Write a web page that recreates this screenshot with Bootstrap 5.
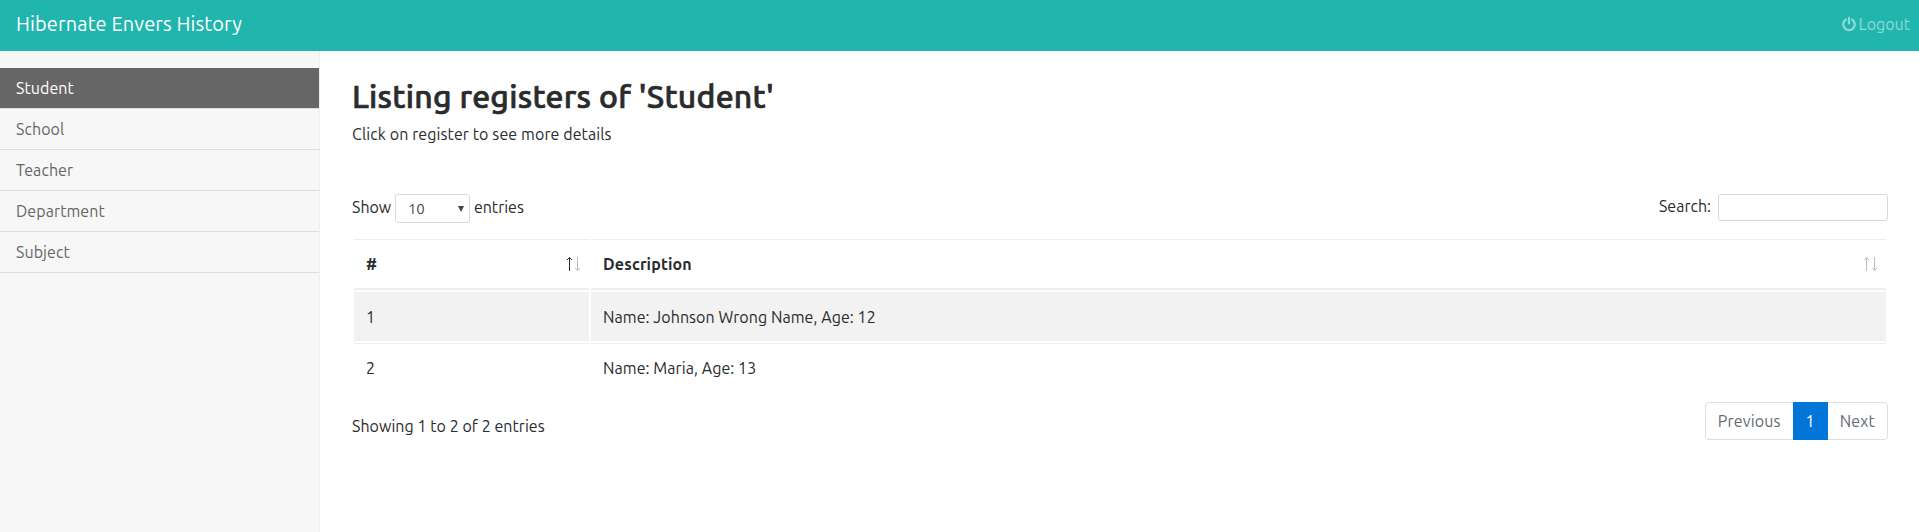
<!DOCTYPE html>
<html lang="en">
<head>
<meta charset="utf-8">
<title>Hibernate Envers History</title>
<link href="https://cdn.jsdelivr.net/npm/bootstrap@5.3.0/dist/css/bootstrap.min.css" rel="stylesheet">
<style>
  body { font-family: Ubuntu, "Noto Sans", sans-serif; font-size: 16px; line-height: 24px; letter-spacing: .07px; color: #292b2c; height: 532px; overflow: hidden; }
  .topbar { background: #20b5ad; height: 51px; padding: 0 9px 0 16px; }
  .topbar .navbar-brand { font-size: 20px; line-height: 30px; letter-spacing: .12px; padding: 0; margin-top: -3px; color: #fff; }
  .logout { color: rgba(255,255,255,.5); margin-top: -3px; gap: 3px; letter-spacing: 0; }
  .sidebar { width: 320px; background: #f7f7f7; border-right: 1px solid #eee; padding-top: 17px; }
  .sidebar .nav-link { color: #666; height: 41px; padding: 8px 16px; border-bottom: 1px solid #ddd; }
  .sidebar .nav-link.active { background: #666; background-clip: padding-box; color: #fff; }
  .content { padding: 26px 31px 0 32px; }
  h2 { font-size: 32px; line-height: 35px; font-weight: 500; letter-spacing: .25px; -webkit-text-stroke: .7px #292b2c; margin: 2px 0 8px; }
  .intro { letter-spacing: .1px; }
  .controls { margin-top: 48px; height: 43px; }
  .controls label { letter-spacing: 0; }
  .len { width: 75px; height: 29px; border: 1px solid #d9d9d9; border-radius: 3px; color: #464a4c; font-size: 15px; padding: 0 5px 0 12px; margin-left: -.4px; }
  .find { width: 170px; height: 27px; border: 1px solid #d9d9d9; border-radius: 3px; padding: 0 8px; margin-left: 7px; }
  .caption-text { padding-bottom: 3px; }
  .records { border-collapse: separate; border-spacing: 2px; width: 100%; table-layout: fixed; }
  .records th, .records td { height: 49px; padding: 12px; border-top: 1px solid #eceeef; }
  .records th { height: 51px; border-bottom: 2px solid #eceeef; letter-spacing: .15px; }
  .records tbody tr:first-child td { background: #f2f2f2; }
  .records th:first-child { width: 235px; }
  .sorter { margin-right: -4px; }
  .pagination { --bs-pagination-color: #636c72; --bs-pagination-border-color: #ddd; --bs-pagination-disabled-color: #636c72; --bs-pagination-disabled-bg: #fff; --bs-pagination-disabled-border-color: #ddd; --bs-pagination-active-bg: #0275d8; --bs-pagination-active-border-color: #0275d8; --bs-pagination-border-radius: 4px; margin: 8px 0 0; letter-spacing: .15px; }
  .page-link { height: 38px; padding: 6px 12px; }
  .summary { margin-top: 20px; letter-spacing: .04px; }
</style>
</head>
<body class="d-flex flex-column">
<nav class="topbar navbar flex-shrink-0 flex-nowrap">
  <a class="navbar-brand me-0" href="#">Hibernate Envers History</a>
  <a class="logout d-flex align-items-center text-decoration-none" href="#">
    <svg width="14" height="16" viewBox="0 0 14 16" fill="none" stroke="currentColor" stroke-width="2.2" stroke-linecap="round"><path d="M7 1.8v5.6M3.8 3.7a5.7 5.7 0 1 0 6.4 0"/></svg>Logout</a>
</nav>
<div class="d-flex flex-grow-1">
  <aside class="sidebar flex-shrink-0">
    <nav class="nav flex-column">
      <a class="nav-link active" href="#">Student</a>
      <a class="nav-link" href="#">School</a>
      <a class="nav-link" href="#">Teacher</a>
      <a class="nav-link" href="#">Department</a>
      <a class="nav-link" href="#">Subject</a>
    </nav>
  </aside>
  <main class="content flex-grow-1">
    <h2>Listing registers of 'Student'</h2>
    <div class="intro">Click on register to see more details</div>
    <div class="controls d-flex justify-content-between align-items-start">
      <label class="d-flex align-items-center gap-1"><span class="caption-text">Show</span>
        <span class="len d-flex align-items-center justify-content-between">10
          <svg width="6" height="6" viewBox="0 0 6 6"><path d="M0 0h6L3 6z" fill="#444"/></svg></span>
        <span class="caption-text">entries</span></label>
      <label class="d-flex align-items-center"><span class="caption-text">Search:</span><input class="find" type="search"></label>
    </div>
    <table class="records">
      <thead><tr>
        <th><div class="d-flex justify-content-between align-items-center">#
          <svg class="sorter" width="15" height="16" viewBox="0 0 15 16" fill="none"><path d="M3.5 15V2M1 4l2.5-2.5L6 4" stroke="#292b2c"/><path d="M11.5 1v13M9 12l2.5 2.5L14 12" stroke="#bbb"/></svg></div></th>
        <th><div class="d-flex justify-content-between align-items-center">Description
          <svg class="sorter" width="15" height="16" viewBox="0 0 15 16" fill="none" stroke="#bbb"><path d="M3.5 15V2M1 4l2.5-2.5L6 4M11.5 1v13M9 12l2.5 2.5L14 12"/></svg></div></th>
      </tr></thead>
      <tbody>
        <tr><td>1</td><td>Name: Johnson Wrong Name, Age: 12</td></tr>
        <tr><td>2</td><td>Name: Maria, Age: 13</td></tr>
      </tbody>
    </table>
    <div class="d-flex justify-content-between align-items-start">
      <div class="summary">Showing 1 to 2 of 2 entries</div>
      <ul class="pagination">
        <li class="page-item disabled"><a class="page-link">Previous</a></li>
        <li class="page-item active"><a class="page-link" href="#">1</a></li>
        <li class="page-item disabled"><a class="page-link">Next</a></li>
      </ul>
    </div>
  </main>
</div>
<script src="https://cdn.jsdelivr.net/npm/bootstrap@5.3.0/dist/js/bootstrap.bundle.min.js"></script>
</body>
</html>
